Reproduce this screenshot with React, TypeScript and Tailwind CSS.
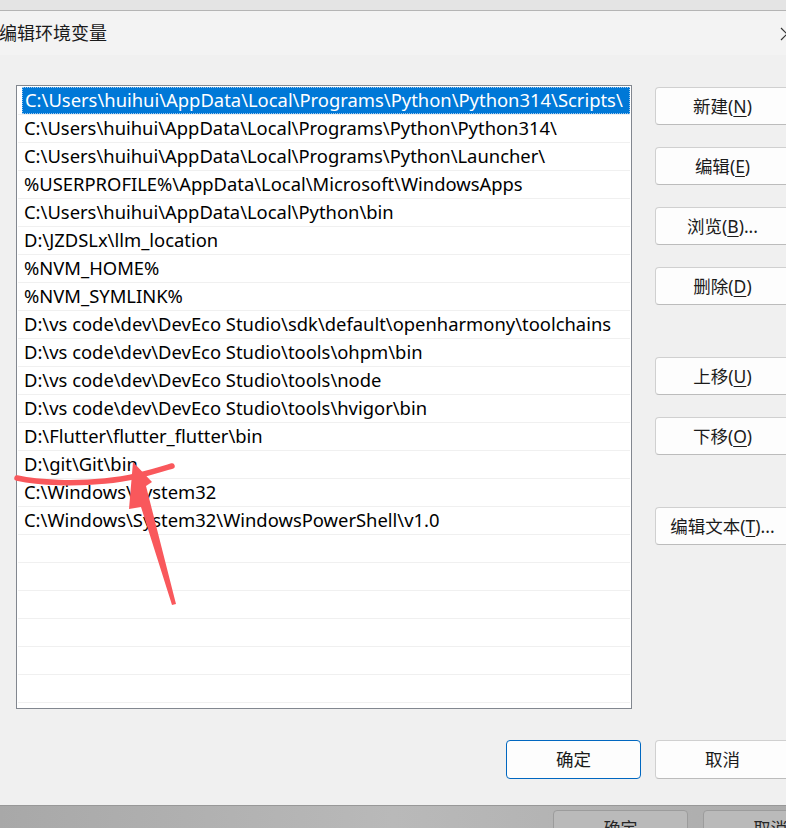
import React from "react";

const items: string[] = [
  "C:\\Users\\huihui\\AppData\\Local\\Programs\\Python\\Python314\\Scripts\\",
  "C:\\Users\\huihui\\AppData\\Local\\Programs\\Python\\Python314\\",
  "C:\\Users\\huihui\\AppData\\Local\\Programs\\Python\\Launcher\\",
  "%USERPROFILE%\\AppData\\Local\\Microsoft\\WindowsApps",
  "C:\\Users\\huihui\\AppData\\Local\\Python\\bin",
  "D:\\JZDSLx\\llm_location",
  "%NVM_HOME%",
  "%NVM_SYMLINK%",
  "D:\\vs code\\dev\\DevEco Studio\\sdk\\default\\openharmony\\toolchains",
  "D:\\vs code\\dev\\DevEco Studio\\tools\\ohpm\\bin",
  "D:\\vs code\\dev\\DevEco Studio\\tools\\node",
  "D:\\vs code\\dev\\DevEco Studio\\tools\\hvigor\\bin",
  "D:\\Flutter\\flutter_flutter\\bin",
  "D:\\git\\Git\\bin",
  "C:\\Windows\\System32",
  "C:\\Windows\\System32\\WindowsPowerShell\\v1.0",
];

const rows: string[] = [...items, ...Array(8).fill("")];

function Btn({ label, mn, tail }: { label: string; mn?: string; tail?: string }) {
  return (
    <div className="w-[135px] h-[38px] shrink-0 rounded-[4px] border border-[#d0d0d0] border-b-[#bcbcbc] bg-[#fdfdfd] flex items-center justify-center text-[17.5px] text-[#1b1b1b]">
      <span>
        {label}
        {mn !== undefined && (
          <>
            (<span className="underline underline-offset-[3px] decoration-1">{mn}</span>)
          </>
        )}
        {tail}
      </span>
    </div>
  );
}

export default function App() {
  return (
    <div
      className="relative w-[786px] h-[828px] overflow-hidden bg-[#f0f0f0] flex flex-col"
      style={{ fontFamily: '"Noto Sans", "Noto Sans CJK SC", sans-serif' }}
    >
      {/* top strip */}
      <div className="h-[10px] shrink-0 bg-[#e4e4e4]" />
      <div className="h-px shrink-0 bg-[#b4b4b4]" />
      {/* title bar */}
      <div className="h-[44px] shrink-0 bg-[#f3f3f3] flex items-center justify-between">
        <span className="text-[18px] text-[#1a1a1a] leading-none -ml-[1px]">编辑环境变量</span>
        <svg width="14" height="14" viewBox="0 0 14 14" className="mr-[-8px] mt-[1px]">
          <path d="M1 1 L13 13 M13 1 L1 13" stroke="#333" strokeWidth="1.2" fill="none" />
        </svg>
      </div>
      {/* body */}
      <div className="h-[750px] shrink-0 flex flex-col pl-[16px] pt-[30px]">
        <div className="flex gap-[23px]">
          <div className="w-[616px] h-[624px] shrink-0 border border-[#82878f] bg-white overflow-hidden pt-[1px] pr-px">
            {rows.map((t, i) => (
              <div
                key={i}
                className="h-[28px] ml-px border-b border-[#f0f0f0] flex items-stretch"
              >
                {i === 0 ? (
                  <div className="ml-[4px] flex-1 bg-[#0078d7] text-white border border-dotted border-[#9cc8f0] flex items-center pl-[2px] text-[18.4px] whitespace-nowrap leading-none">
                    {t}
                  </div>
                ) : (
                  <div className="ml-[6px] flex-1 flex items-center text-[18.4px] text-black whitespace-nowrap leading-none">
                    {t}
                  </div>
                )}
              </div>
            ))}
          </div>
          <div className="flex flex-col pt-[2px]">
            <Btn label="新建" mn="N" />
            <div className="mt-[22px]"><Btn label="编辑" mn="E" /></div>
            <div className="mt-[22px]"><Btn label="浏览" mn="B" tail="..." /></div>
            <div className="mt-[22px]"><Btn label="删除" mn="D" /></div>
            <div className="mt-[52px]"><Btn label="上移" mn="U" /></div>
            <div className="mt-[22px]"><Btn label="下移" mn="O" /></div>
            <div className="mt-[52px]"><Btn label="编辑文本" mn="T" tail="..." /></div>
          </div>
        </div>
        <div className="mt-[31px] flex justify-end gap-[14px] mr-[-4px]">
          <div className="w-[135px] h-[39px] rounded-[4px] border border-[#0067c0] bg-[#fdfdfd] flex items-center justify-center text-[17.5px] text-[#1b1b1b]">
            确定
          </div>
          <div className="w-[135px] h-[39px] rounded-[4px] border border-[#d0d0d0] border-b-[#bcbcbc] bg-[#fdfdfd] flex items-center justify-center text-[17.5px] text-[#1b1b1b]">
            取消
          </div>
        </div>
      </div>
      {/* parent window (dimmed) */}
      <div className="h-px shrink-0 bg-[#989898]" />
      <div className="flex-1 bg-gradient-to-r from-[#a8a8a8] via-[#b9b9b9] to-[#acacac] flex pl-[553px] pt-[4px] gap-[15px]">
        <div className="w-[135px] h-[38px] shrink-0 rounded-[4px] border border-[#9c9c9c] bg-[#bababa] flex justify-center pt-[9px] text-[17px] text-[#262626] leading-none">
          确定
        </div>
        <div className="w-[135px] h-[38px] shrink-0 rounded-[4px] border border-[#9c9c9c] bg-[#bababa] flex justify-center pt-[9px] text-[17px] text-[#262626] leading-none">
          取消
        </div>
      </div>
      {/* red annotation */}
      <svg className="absolute left-0 top-0 pointer-events-none" width="786" height="828" viewBox="0 0 786 828">
        <path
          d="M17 478 C 40 483, 75 484, 105 481 C 130 479, 152 472, 172 466"
          stroke="#f9585c"
          strokeWidth="5.5"
          strokeLinecap="round"
          fill="none"
        />
        <polygon
          points="133,462 152,482 146,486 176,604 172,605 141,507 129,509"
          fill="#f9585c"
        />
      </svg>
    </div>
  );
}
